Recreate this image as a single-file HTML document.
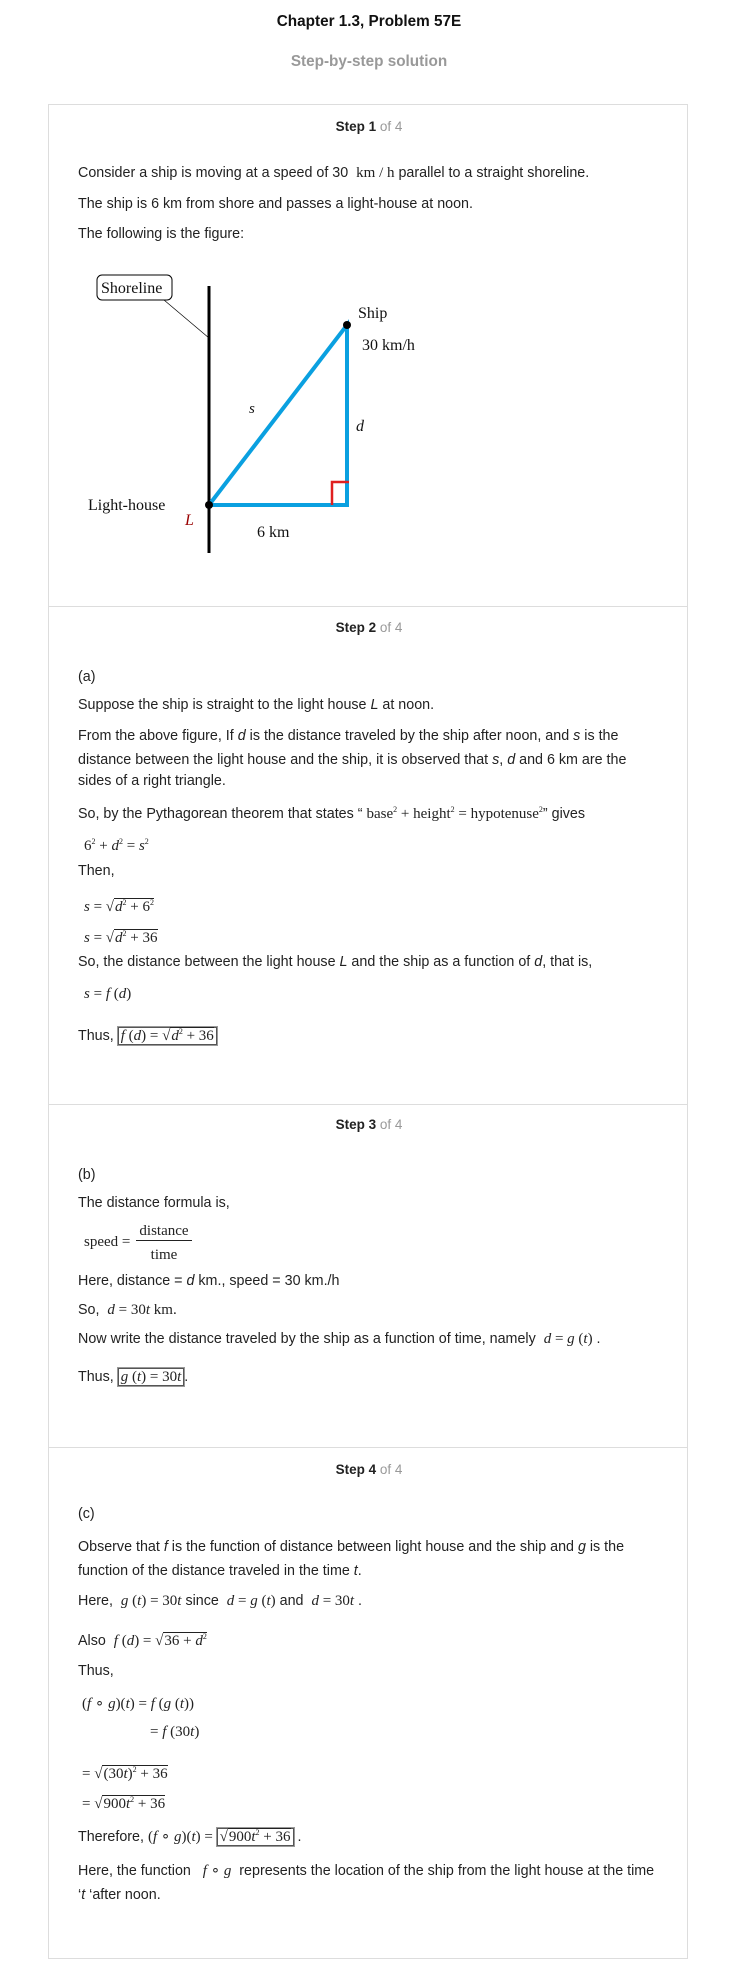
<!DOCTYPE html>
<html><head><meta charset="utf-8"><style>
body{margin:0;background:#fff;font-family:"Liberation Sans",Arial,sans-serif;color:#222;}
#pg{position:relative;width:738px;height:1984px;overflow:hidden}
.a{position:absolute;white-space:nowrap;font-size:14.3px;line-height:16px}
.c{left:0;width:738px;text-align:center}
.m{font-family:"Liberation Serif",serif;font-size:15px}
.i{font-style:italic}
.sq{border-top:1px solid #222;padding-left:1px}
.bx{border:1px solid #555;box-shadow:0 0 0 1px #999;padding:0 2px}
.div{position:absolute;left:48px;width:640px;height:1px;background:#ddd}
.st{font-weight:bold;color:#222;font-size:13.5px}
.st span{font-weight:normal;color:#999}
sup{font-size:8px}
</style></head><body><div id="pg">
<div class="a c" style="top:14px;font-size:15.3px;font-weight:bold;color:#111">Chapter 1.3, Problem 57E</div>
<div class="a c" style="top:54px;font-size:15.3px;font-weight:bold;color:#999">Step-by-step solution</div>
<div style="position:absolute;left:48px;top:104px;width:638px;height:1853px;border:1px solid #ddd"></div>
<div class="div" style="top:606px"></div>
<div class="div" style="top:1104px"></div>
<div class="div" style="top:1447px"></div>

<div class="a c st" style="top:119px">Step 1 <span>of 4</span></div>
<div class="a" style="left:78px;top:165px">Consider a ship is moving at a speed of 30 &nbsp;<span class="m">km / h</span> parallel to a straight shoreline.</div>
<div class="a" style="left:78px;top:196px">The ship is 6 km from shore and passes a light-house at noon.</div>
<div class="a" style="left:78px;top:226px">The following is the figure:</div>
<svg style="position:absolute;left:0;top:0" width="738" height="600">
<rect x="97" y="275" width="75" height="25" rx="5" fill="none" stroke="#000" stroke-width="1"/>
<line x1="164" y1="300" x2="209" y2="338" stroke="#000" stroke-width="0.7"/>
<line x1="209" y1="286" x2="209" y2="553" stroke="#000" stroke-width="3"/>
<polyline points="209,505 347,325 347,505 209,505" fill="none" stroke="#0aa0e0" stroke-width="4"/>
<polyline points="332,505 332,482 349,482" fill="none" stroke="#e02020" stroke-width="2.5"/>
<circle cx="347" cy="325" r="4" fill="#000"/><circle cx="209" cy="505" r="4" fill="#000"/>
<g font-family="Liberation Serif,serif" font-size="16" fill="#111">
<text x="101" y="293">Shoreline</text>
<text x="358" y="318">Ship</text>
<text x="362" y="350">30 km/h</text>
<text x="249" y="413" font-style="italic" font-size="15">s</text>
<text x="356" y="431" font-style="italic">d</text>
<text x="88" y="510">Light-house</text>
<text x="185" y="525" font-style="italic" fill="#900">L</text>
<text x="257" y="537">6 km</text>
</g></svg>

<div class="a c st" style="top:620px">Step 2 <span>of 4</span></div>
<div class="a" style="left:78px;top:669px">(a)</div>
<div class="a" style="left:78px;top:697px">Suppose the ship is straight to the light house <i>L</i> at noon.</div>
<div class="a" style="left:78px;top:728px">From the above figure, If <i>d</i> is the distance traveled by the ship after noon, and <i>s</i> is the</div>
<div class="a" style="left:78px;top:752px">distance between the light house and the ship, it is observed that <i>s</i>, <i>d</i> and 6 km are the</div>
<div class="a" style="left:78px;top:773px">sides of a right triangle.</div>
<div class="a" style="left:78px;top:802px">So, by the Pythagorean theorem that states “ <span class="m">base<sup>2</sup> + height<sup>2</sup> = hypotenuse<sup>2</sup></span>” gives</div>
<div class="a m" style="left:84px;top:834px">6<sup>2</sup> + <i>d</i><sup>2</sup> = <i>s</i><sup>2</sup></div>
<div class="a" style="left:78px;top:863px">Then,</div>
<div class="a m" style="left:84px;top:895px"><i>s</i> = √<span class="sq"><i>d</i><sup>2</sup> + 6<sup>2</sup></span></div>
<div class="a m" style="left:84px;top:926px"><i>s</i> = √<span class="sq"><i>d</i><sup>2</sup> + 36</span></div>
<div class="a" style="left:78px;top:954px">So, the distance between the light house <i>L</i> and the ship as a function of <i>d</i>, that is,</div>
<div class="a m" style="left:84px;top:986px"><i>s</i> = <i>f</i> (<i>d</i>)</div>
<div class="a" style="left:78px;top:1024px">Thus, <span class="m bx"><i>f</i> (<i>d</i>) = √<span class="sq"><i>d</i><sup>2</sup> + 36</span></span></div>

<div class="a c st" style="top:1117px">Step 3 <span>of 4</span></div>
<div class="a" style="left:78px;top:1167px">(b)</div>
<div class="a" style="left:78px;top:1195px">The distance formula is,</div>
<div class="a m" style="left:84px;top:1234px">speed =</div>
<div class="a m" style="left:136px;top:1223px;width:56px;text-align:center;border-bottom:1px solid #222;line-height:17px">distance</div>
<div class="a m" style="left:136px;top:1247px;width:56px;text-align:center">time</div>
<div class="a" style="left:78px;top:1273px">Here, distance = <i>d</i> km., speed = 30 km./h</div>
<div class="a" style="left:78px;top:1302px">So, &nbsp;<span class="m"><i>d</i> = 30<i>t</i> km.</span></div>
<div class="a" style="left:78px;top:1331px">Now write the distance traveled by the ship as a function of time, namely &nbsp;<span class="m"><i>d</i> = <i>g</i> (<i>t</i>)</span> .</div>
<div class="a" style="left:78px;top:1369px">Thus, <span class="m bx"><i>g</i> (<i>t</i>) = 30<i>t</i></span>.</div>

<div class="a c st" style="top:1462px">Step 4 <span>of 4</span></div>
<div class="a" style="left:78px;top:1506px">(c)</div>
<div class="a" style="left:78px;top:1539px">Observe that <i>f</i> is the function of distance between light house and the ship and <i>g</i> is the</div>
<div class="a" style="left:78px;top:1563px">function of the distance traveled in the time <i>t</i>.</div>
<div class="a" style="left:78px;top:1593px">Here, &nbsp;<span class="m"><i>g</i> (<i>t</i>) = 30<i>t</i></span> since &nbsp;<span class="m"><i>d</i> = <i>g</i> (<i>t</i>)</span> and &nbsp;<span class="m"><i>d</i> = 30<i>t</i></span> .</div>
<div class="a" style="left:78px;top:1629px">Also &nbsp;<span class="m"><i>f</i> (<i>d</i>) = √<span class="sq">36 + <i>d</i><sup>2</sup></span></span></div>
<div class="a" style="left:78px;top:1663px">Thus,</div>
<div class="a m" style="left:82px;top:1696px">(<i>f</i> ∘ <i>g</i>)(<i>t</i>) = <i>f</i> (<i>g</i> (<i>t</i>))</div>
<div class="a m" style="left:150px;top:1724px">= <i>f</i> (30<i>t</i>)</div>
<div class="a m" style="left:82px;top:1762px">= √<span class="sq">(30<i>t</i>)<sup>2</sup> + 36</span></div>
<div class="a m" style="left:82px;top:1792px">= √<span class="sq">900<i>t</i><sup>2</sup> + 36</span></div>
<div class="a" style="left:78px;top:1825px">Therefore, <span class="m">(<i>f</i> ∘ <i>g</i>)(<i>t</i>) = <span class="bx">√<span class="sq">900<i>t</i><sup>2</sup> + 36</span></span></span> .</div>
<div class="a" style="left:78px;top:1863px">Here, the function &nbsp;&nbsp;<span class="m"><i>f</i> ∘ <i>g</i></span> &nbsp;represents the location of the ship from the light house at the time</div>
<div class="a" style="left:78px;top:1887px">‘<i>t</i> ‘after noon.</div>
</div></body></html>
